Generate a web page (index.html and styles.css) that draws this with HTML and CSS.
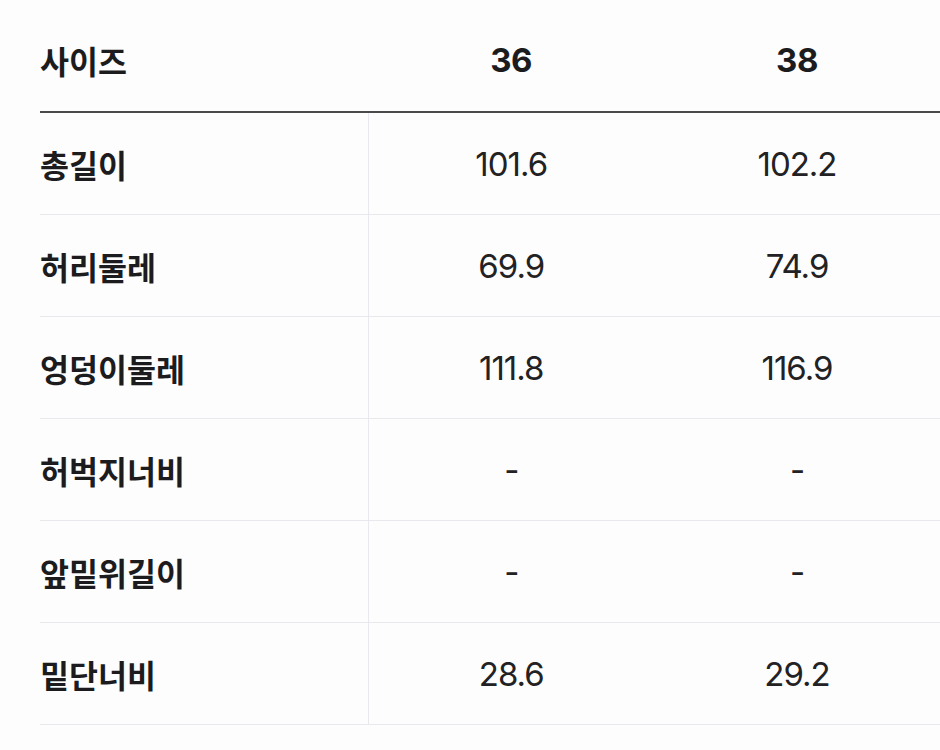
FILE: index.html
```html
<!DOCTYPE html>
<html lang="ko">
<head>
<meta charset="utf-8">
<link rel="stylesheet" href="styles.css">
</head>
<body>
<table class="size-table">
  <thead>
    <tr>
      <th class="label">사이즈</th>
      <th class="val">36</th>
      <th class="val">38</th>
    </tr>
  </thead>
  <tbody>
    <tr><td class="label">총길이</td><td class="val">101.6</td><td class="val">102.2</td></tr>
    <tr><td class="label">허리둘레</td><td class="val">69.9</td><td class="val">74.9</td></tr>
    <tr><td class="label">엉덩이둘레</td><td class="val">111.8</td><td class="val">116.9</td></tr>
    <tr><td class="label">허벅지너비</td><td class="val">-</td><td class="val">-</td></tr>
    <tr><td class="label">앞밑위길이</td><td class="val">-</td><td class="val">-</td></tr>
    <tr><td class="label">밑단너비</td><td class="val">28.6</td><td class="val">29.2</td></tr>
  </tbody>
</table>
</body>
</html>
```
FILE: styles.css
```css
html, body {
  margin: 0;
  padding: 0;
  background: #fdfdfd;
}
body {
  padding-left: 40px;
  font-family: Inter, "Noto Sans CJK KR", sans-serif;
  color: #1c1c1e;
  overflow: hidden;
}
.size-table {
  width: 900px;
  border-collapse: collapse;
  table-layout: fixed;
}
.size-table th,
.size-table td {
  padding: 0;
  vertical-align: middle;
}
.size-table thead th {
  height: 102px;
  padding-top: 9px;
  border-bottom: 2px solid #4a4a4c;
  font-weight: 700;
}
.size-table thead th.label {
  width: 328px;
  text-align: left;
  font-family: "Noto Sans CJK KR", sans-serif;
  font-size: 31.5px;
}
.size-table thead th.val {
  font-size: 33px;
  letter-spacing: -0.5px;
}
.size-table tbody td {
  height: 101px;
  border-bottom: 1px solid #e9e9ed;
}
.size-table tbody td.label {
  font-family: "Noto Sans CJK KR", sans-serif;
  font-weight: 700;
  font-size: 31.5px;
  border-right: 1px solid #e9e9ed;
  text-align: left;
}
.size-table tbody td.val {
  text-align: center;
  font-size: 33px;
  font-weight: 400;
  letter-spacing: -1px;
  color: #222224;
}
```
